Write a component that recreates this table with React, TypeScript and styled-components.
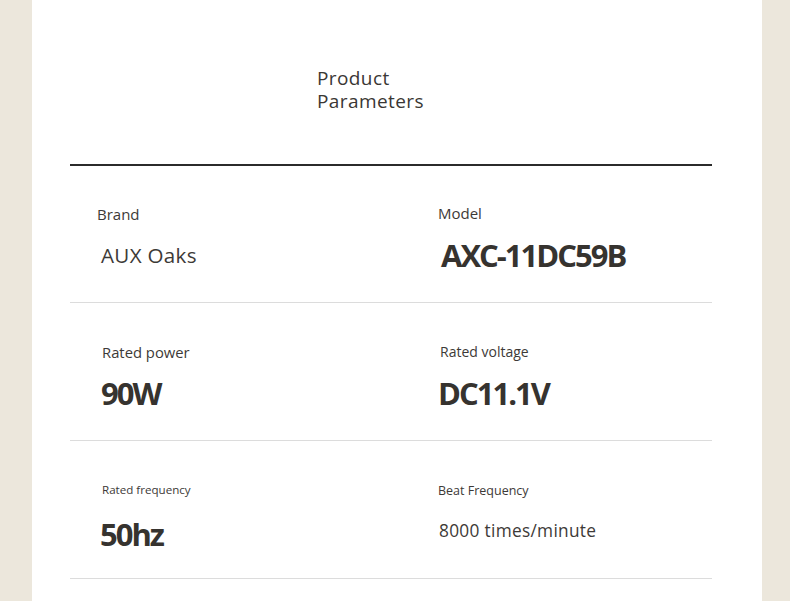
import React from 'react';
import styled, { createGlobalStyle } from 'styled-components';

const GlobalStyle = createGlobalStyle`
  html, body {
    margin: 0;
    padding: 0;
    background: #ece7dc;
  }
  body {
    font-family: 'Open Sans', 'Noto Sans', sans-serif;
    color: #3a3734;
  }
`;

const Page = styled.div`
  display: flex;
  min-height: 601px;
  padding: 0 28px 0 32px;
`;

const Panel = styled.div`
  width: 730px;
  background: #fff;
  padding: 0 50px 0 38px;
  box-sizing: border-box;
`;

const Header = styled.div`
  box-sizing: border-box;
  height: 166px;
  padding: 67px 0 0 247px;
  border-bottom: 2px solid #2b2b2b;
`;

const Title = styled.h1`
  margin: 0;
  width: 120px;
  font-size: 19px;
  line-height: 23px;
  font-weight: 400;
  letter-spacing: 0.4px;
  color: #3a3734;
`;

const Row = styled.div<{ $first?: boolean }>`
  display: grid;
  grid-template-columns: 1fr 1fr;
  height: ${(p) => (p.$first ? 136 : 137)}px;
  border-bottom: 1px solid #dcdcdc;
`;

const Cell = styled.div<{ $pad: number }>`
  display: flex;
  flex-direction: column;
  padding-left: ${(p) => p.$pad}px;
`;

const Label = styled.div<{ $size: number; $top: number; $pad?: number }>`
  margin-top: ${(p) => p.$top}px;
  padding-left: ${(p) => p.$pad ?? 0}px;
  height: 20px;
  line-height: 20px;
  font-size: ${(p) => p.$size}px;
  color: #3d3a37;
`;

const Value = styled.div<{ $bold?: boolean; $size: number; $top: number; $pad?: number }>`
  margin-top: ${(p) => p.$top}px;
  padding-left: ${(p) => p.$pad ?? 0}px;
  line-height: 40px;
  font-size: ${(p) => p.$size}px;
  font-weight: ${(p) => (p.$bold ? 700 : 400)};
  letter-spacing: ${(p) => (p.$bold ? '-2px' : '0.3px')};
  color: ${(p) => (p.$bold ? '#36332f' : '#3d3a37')};
`;

type Item = {
  label: string;
  labelSize: number;
  labelTop: number;
  labelPad?: number;
  value: string;
  valueSize: number;
  valueTop: number;
  valuePad?: number;
  bold?: boolean;
};

const rows: Item[][] = [
  [
    { label: 'Brand', labelSize: 15, labelTop: 38, value: 'AUX Oaks', valueSize: 20.6, valueTop: 11, valuePad: 4 },
    { label: 'Model', labelSize: 15, labelTop: 37, value: 'AXC-11DC59B', valueSize: 31, valueTop: 12, valuePad: 3, bold: true },
  ],
  [
    { label: 'Rated power', labelSize: 14.8, labelTop: 39, labelPad: 5, value: '90W', valueSize: 31, valueTop: 11, valuePad: 4, bold: true },
    { label: 'Rated voltage', labelSize: 14, labelTop: 39, labelPad: 2, value: 'DC11.1V', valueSize: 31, valueTop: 11, valuePad: 0, bold: true },
  ],
  [
    { label: 'Rated frequency', labelSize: 11.6, labelTop: 39, labelPad: 5, value: '50hz', valueSize: 31, valueTop: 14, valuePad: 3, bold: true },
    { label: 'Beat Frequency', labelSize: 12.5, labelTop: 40, value: '8000 times/minute', valueSize: 17.3, valueTop: 10, valuePad: 1 },
  ],
];

const pads = [27, 47];

const App = () => {
  return (
    <>
      <GlobalStyle />
      <Page>
        <Panel>
          <Header>
            <Title>Product Parameters</Title>
          </Header>
          {rows.map((row, i) => (
            <Row key={i} $first={i === 0}>
              {row.map((item, j) => (
                <Cell key={item.label} $pad={pads[j]}>
                  <Label $size={item.labelSize} $top={item.labelTop} $pad={item.labelPad}>
                    {item.label}
                  </Label>
                  <Value
                    $bold={item.bold}
                    $size={item.valueSize}
                    $top={item.valueTop}
                    $pad={item.valuePad}
                  >
                    {item.value}
                  </Value>
                </Cell>
              ))}
            </Row>
          ))}
        </Panel>
      </Page>
    </>
  );
};

export default App;
